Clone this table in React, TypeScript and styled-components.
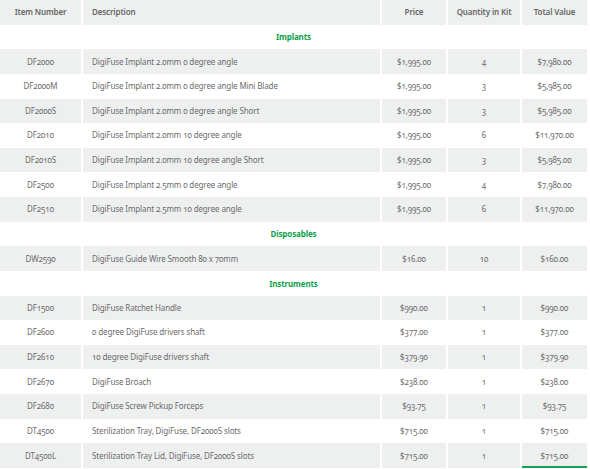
import React from "react";
import styled, { createGlobalStyle } from "styled-components";

const Global = createGlobalStyle`
  html, body { margin: 0; padding: 0; background: #ffffff; }
  body { font-family: "Noto Sans", "Open Sans", sans-serif; }
`;

const Table = styled.table`
  width: 587px;
  border-collapse: collapse;
  table-layout: fixed;
  font-family: "Noto Sans", "Open Sans", sans-serif;
  font-size: 8px;
  letter-spacing: -0.12px;
  font-variant-numeric: oldstyle-nums;
  font-feature-settings: "onum" 1;
  color: #6c6c6c;
`;

const Row = styled.tr<{ $shade?: boolean }>`
  height: 24.63px;
  background: ${(p) => (p.$shade ? "#eeefef" : "#ffffff")};
`;

const HeadCell = styled.th<{ $align?: string }>`
  font-weight: 600;
  color: #666666;
  text-align: ${(p) => p.$align || "center"};
  padding: 0 0 1px ${(p) => (p.$align === "left" ? "9px" : "0")};
  border-left: 2px solid #ffffff;
  &:first-child { border-left: none; }
`;

const Cell = styled.td<{ $align?: string; $accent?: boolean }>`
  text-align: ${(p) => p.$align || "center"};
  padding: 0 0 1px ${(p) => (p.$align === "left" ? "9px" : "0")};
  border-left: 2px solid #ffffff;
  white-space: nowrap;
  &:first-child { border-left: none; }
  ${(p) => (p.$accent ? "box-shadow: inset 0 -2px 0 #13a350;" : "")}
`;

const SectionCell = styled.td`
  text-align: center;
  color: #0ba24b;
  font-weight: 700;
  padding-bottom: 1px;
`;

type Item = [string, string, string, string, string];

const sections: { title: string; items: Item[] }[] = [
  {
    title: "Implants",
    items: [
      ["DF2000", "DigiFuse Implant 2.0mm 0 degree angle", "$1,995.00", "4", "$7,980.00"],
      ["DF2000M", "DigiFuse Implant 2.0mm 0 degree angle Mini Blade", "$1,995.00", "3", "$5,985.00"],
      ["DF2000S", "DigiFuse Implant 2.0mm 0 degree angle Short", "$1,995.00", "3", "$5,985.00"],
      ["DF2010", "DigiFuse Implant 2.0mm 10 degree angle", "$1,995.00", "6", "$11,970.00"],
      ["DF2010S", "DigiFuse Implant 2.0mm 10 degree angle Short", "$1,995.00", "3", "$5,985.00"],
      ["DF2500", "DigiFuse Implant 2.5mm 0 degree angle", "$1,995.00", "4", "$7,980.00"],
      ["DF2510", "DigiFuse Implant 2.5mm 10 degree angle", "$1,995.00", "6", "$11,970.00"],
    ],
  },
  {
    title: "Disposables",
    items: [["DW2590", "DigiFuse Guide Wire Smooth 80 x 70mm", "$16.00", "10", "$160.00"]],
  },
  {
    title: "Instruments",
    items: [
      ["DF1500", "DigiFuse Ratchet Handle", "$990.00", "1", "$990.00"],
      ["DF2600", "0 degree DigiFuse drivers shaft", "$377.00", "1", "$377.00"],
      ["DF2610", "10 degree DigiFuse drivers shaft", "$379.90", "1", "$379.90"],
      ["DF2670", "DigiFuse Broach", "$238.00", "1", "$238.00"],
      ["DF2680", "DigiFuse Screw Pickup Forceps", "$93.75", "1", "$93.75"],
      ["DT4500", "Sterilization Tray, DigiFuse, DF2000S slots", "$715.00", "1", "$715.00"],
      ["DT4500L", "Sterilization Tray Lid, DigiFuse, DF2000S slots", "$715.00", "1", "$715.00"],
    ],
  },
];

export default function App() {
  const lastSection = sections.length - 1;
  return (
    <>
      <Global />
      <Table>
        <colgroup>
          <col style={{ width: 82 }} />
          <col style={{ width: 299 }} />
          <col style={{ width: 66 }} />
          <col style={{ width: 74 }} />
          <col style={{ width: 66 }} />
        </colgroup>
        <thead>
          <Row $shade>
            <HeadCell>Item Number</HeadCell>
            <HeadCell $align="left">Description</HeadCell>
            <HeadCell>Price</HeadCell>
            <HeadCell>Quantity in Kit</HeadCell>
            <HeadCell>Total Value</HeadCell>
          </Row>
        </thead>
        <tbody>
          {sections.map((s, si) => (
            <React.Fragment key={s.title}>
              <Row>
                <SectionCell colSpan={5}>{s.title}</SectionCell>
              </Row>
              {s.items.map((it, ii) => {
                const last = si === lastSection && ii === s.items.length - 1;
                return (
                  <Row key={it[0]} $shade={ii % 2 === 0}>
                    <Cell>{it[0]}</Cell>
                    <Cell $align="left">{it[1]}</Cell>
                    <Cell>{it[2]}</Cell>
                    <Cell>{it[3]}</Cell>
                    <Cell $accent={last}>{it[4]}</Cell>
                  </Row>
                );
              })}
            </React.Fragment>
          ))}
        </tbody>
      </Table>
    </>
  );
}
